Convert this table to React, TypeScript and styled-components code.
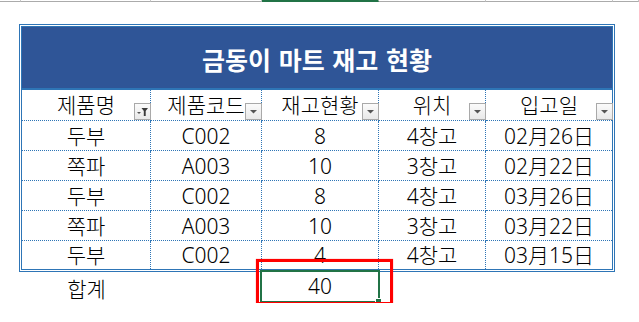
import React from "react";
import styled, { createGlobalStyle } from "styled-components";

const GlobalStyle = createGlobalStyle`
  html, body { margin: 0; padding: 0; background: #ffffff; }
  body {
    font-family: "Noto Sans", "Noto Sans CJK KR", sans-serif;
    color: #000000;
  }
`;

const BLUE_LINE = "#2e75b6";
const TITLE_FILL = "#2f5597";
const EXCEL_GREEN = "#217346";

/* column widths inside the table frame (last column has no right rule) */
const COLUMNS = "129px 111px 117px 107px 126px";

const ColumnStrip = styled.div`
  display: flex;
  height: 2px;
`;

const StripCell = styled.div<{ $w?: number; $active?: boolean }>`
  box-sizing: border-box;
  flex: ${(p) => (p.$w ? `0 0 ${p.$w}px` : "1 1 auto")};
  height: 2px;
  border-right: 1px solid #c6c6c6;
  border-bottom: ${(p) => (p.$active ? `2px solid ${EXCEL_GREEN}` : "1px solid #ababab")};
`;

const Sheet = styled.div`
  padding: 22px 0 0 19px;
`;

const Table = styled.div`
  box-sizing: border-box;
  width: 596px;
  border: 3px double ${BLUE_LINE};
  background: #ffffff;
`;

const Title = styled.div`
  box-sizing: border-box;
  height: 63px;
  display: flex;
  align-items: center;
  justify-content: center;
  background: ${TITLE_FILL};
  border-bottom: 2px solid ${BLUE_LINE};
  color: #ffffff;
  font-family: "Noto Sans CJK KR", sans-serif;
  font-size: 25px;
  font-weight: 700;
  word-spacing: 2px;
  padding-top: 2px;
`;

const Row = styled.div<{ $h: number }>`
  display: grid;
  grid-template-columns: ${COLUMNS};
  height: ${(p) => p.$h}px;
`;

const Cell = styled.div<{ $last?: boolean; $bottom?: boolean }>`
  position: relative;
  box-sizing: border-box;
  display: flex;
  align-items: center;
  justify-content: center;
  font-size: 21px;
  font-weight: 300;
  line-height: 1;
  padding-top: 1px;
  border-right: ${(p) => (p.$last ? "none" : `1px dotted ${BLUE_LINE}`)};
  border-bottom: ${(p) => (p.$bottom ? `1px dotted ${BLUE_LINE}` : "none")};
`;

const FilterButton = styled.div`
  position: absolute;
  right: -1px;
  bottom: 0;
  width: 17px;
  height: 17px;
  box-sizing: border-box;
  border: 1px solid #a9a9a9;
  background: linear-gradient(#fbfbfb, #e9e9e9);
  display: flex;
  align-items: center;
  justify-content: center;
`;

const TotalsRow = styled.div`
  display: grid;
  grid-template-columns: ${COLUMNS};
  height: 31px;
  margin-left: 3px;
`;

const TotalLabel = styled.div`
  display: flex;
  align-items: center;
  justify-content: center;
  font-size: 21px;
  font-weight: 300;
  line-height: 1;
  padding-top: 3px;
`;

const SelectedCell = styled.div`
  position: relative;
  box-sizing: border-box;
  height: 33px;
  margin: -2px -1px 0 -2px;
  border: 2px solid ${EXCEL_GREEN};
  display: flex;
  align-items: center;
  justify-content: center;
  font-size: 21px;
  font-weight: 300;
  line-height: 1;
`;

const FillHandle = styled.div`
  position: absolute;
  right: -3px;
  bottom: -2px;
  width: 5px;
  height: 4px;
  background: ${EXCEL_GREEN};
  box-shadow: 0 0 0 1px #ffffff;
`;

const Highlight = styled.div`
  position: absolute;
  left: -6px;
  top: -13px;
  right: -15px;
  bottom: -4px;
  border: 3px solid #ff0000;
  box-shadow: 0 0 1px rgba(255, 0, 0, 0.6);
  pointer-events: none;
`;

const DropArrow = () => (
  <svg width="15" height="15" viewBox="0 0 15 15">
    <path d="M4 6 H11 L7.5 9.5 Z" fill="#555555" />
  </svg>
);

const FilteredArrow = () => (
  <svg width="15" height="15" viewBox="0 0 15 15">
    <path d="M2 8 H6 L4 10 Z" fill="#555555" />
    <path d="M6.5 4 H13 L10.7 7 V12 H8.8 V7 Z" fill="#3a3a3a" />
  </svg>
);

const headers = ["제품명", "제품코드", "재고현황", "위치", "입고일"];

const rows: string[][] = [
  ["두부", "C002", "8", "4창고", "02月26日"],
  ["쪽파", "A003", "10", "3창고", "02月22日"],
  ["두부", "C002", "8", "4창고", "03月26日"],
  ["쪽파", "A003", "10", "3창고", "03月22日"],
  ["두부", "C002", "4", "4창고", "03月15日"],
];

export default function App() {
  return (
    <>
      <GlobalStyle />
      <ColumnStrip>
        <StripCell $w={21} />
        <StripCell $w={130} />
        <StripCell $w={111} />
        <StripCell $w={117} $active />
        <StripCell $w={107} />
        <StripCell $w={127} />
        <StripCell />
      </ColumnStrip>
      <Sheet>
        <Table>
          <Title>금동이 마트 재고 현황</Title>
          <Row $h={31}>
            {headers.map((h, i) => (
              <Cell key={h} $last={i === headers.length - 1} $bottom>
                {h}
                <FilterButton>{i === 0 ? <FilteredArrow /> : <DropArrow />}</FilterButton>
              </Cell>
            ))}
          </Row>
          {rows.map((r, ri) => {
            const isLast = ri === rows.length - 1;
            return (
              <Row key={ri} $h={isLast ? 28 : 30}>
                {r.map((v, ci) => (
                  <Cell key={ci} $last={ci === r.length - 1} $bottom={!isLast}>
                    {v}
                  </Cell>
                ))}
              </Row>
            );
          })}
        </Table>
        <TotalsRow>
          <TotalLabel>합계</TotalLabel>
          <div />
          <SelectedCell>
            40
            <FillHandle />
            <Highlight />
          </SelectedCell>
        </TotalsRow>
      </Sheet>
    </>
  );
}
